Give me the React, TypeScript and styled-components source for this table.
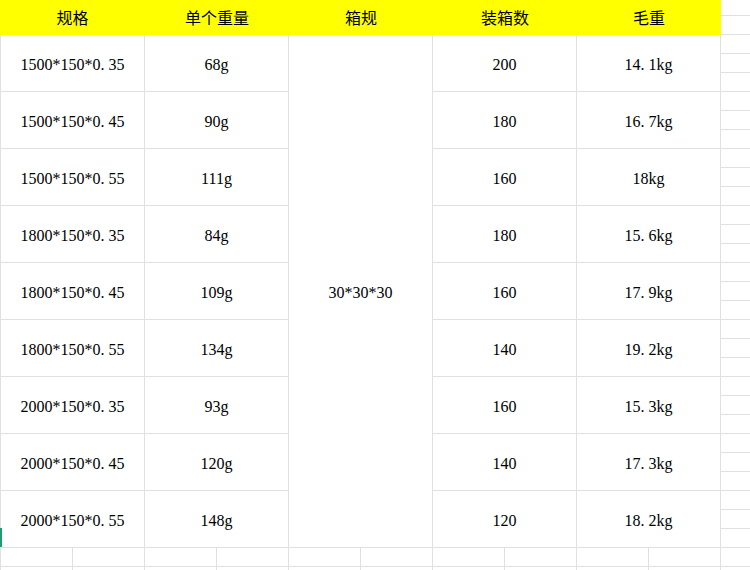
import React from 'react'
import styled, { createGlobalStyle } from 'styled-components'

const LINE = '#e0e0e0'

const GlobalStyle = createGlobalStyle`
    html, body {
        margin: 0;
        padding: 0;
        background: #ffffff;
        overflow: hidden;
    }
`

const Sheet = styled.div`
    width: 750px;
    height: 570px;
    overflow: hidden;
    display: flex;
    flex-direction: column;
    font-family: 'Liberation Serif', 'Noto Sans CJK SC', serif;
    color: #000000;
`

const Top = styled.div`
    display: flex;
    flex-direction: row;
    height: 548px;
`

const Table = styled.div`
    display: grid;
    grid-template-columns: 145px repeat(4, 144px);
    grid-template-rows: 35px repeat(9, 57px);
`

const HeadCell = styled.div`
    background: #ffff00;
    display: flex;
    align-items: center;
    justify-content: center;
    padding-bottom: 1px;
    font-family: 'Noto Sans CJK SC', sans-serif;
    font-size: 16px;
`

const Cell = styled.div<{ $col: number; $rows?: number }>`
    position: relative;
    display: flex;
    align-items: center;
    justify-content: center;
    padding-top: 3px;
    grid-column: ${p => p.$col};
    grid-row: ${p => (p.$rows ? `span ${p.$rows}` : 'auto')};
    border-right: 1px solid ${LINE};
    border-bottom: 1px solid ${LINE};
    border-left: ${p => (p.$col === 1 ? `1px solid ${LINE}` : 'none')};
    font-size: 16px;
    white-space: pre;
`

// SimSun-style full half-width period
const Dot = styled.span`
    display: inline-block;
    width: 0.5em;
`

const Marker = styled.div`
    position: absolute;
    left: -1px;
    bottom: 0;
    width: 2px;
    height: 19px;
    background: #1f9d6f;
`

const Filler = styled.div`
    width: 29px;
    display: flex;
    flex-direction: column;
`

const FillRow = styled.div<{ $h: number }>`
    height: ${p => p.$h}px;
    flex: none;
    box-sizing: border-box;
    border-bottom: 1px solid ${LINE};
`

const BottomRow = styled.div`
    display: grid;
    grid-template-columns: 73px repeat(9, 72px) 29px;
    grid-auto-rows: 19px;
`

const EmptyCell = styled.div<{ $first?: boolean; $last?: boolean }>`
    box-sizing: border-box;
    border-bottom: 1px solid ${LINE};
    border-right: ${p => (p.$last ? 'none' : `1px solid ${LINE}`)};
    border-left: ${p => (p.$first ? `1px solid ${LINE}` : 'none')};
`

const headers = ['规格', '单个重量', '箱规', '装箱数', '毛重']

const rows = [
    ['1500*150*0.35', '68g', '200', '14.1kg'],
    ['1500*150*0.45', '90g', '180', '16.7kg'],
    ['1500*150*0.55', '111g', '160', '18kg'],
    ['1800*150*0.35', '84g', '180', '15.6kg'],
    ['1800*150*0.45', '109g', '160', '17.9kg'],
    ['1800*150*0.55', '134g', '140', '19.2kg'],
    ['2000*150*0.35', '93g', '160', '15.3kg'],
    ['2000*150*0.45', '120g', '140', '17.3kg'],
    ['2000*150*0.55', '148g', '120', '18.2kg'],
]

const Value = ({ text }: { text: string }) => {
    const parts = text.split('.')
    return (
        <span>
            {parts.map((p, i) => (
                <React.Fragment key={i}>
                    {i > 0 && <Dot>.</Dot>}
                    {p}
                </React.Fragment>
            ))}
        </span>
    )
}

const App = () => {
    return (
        <>
            <GlobalStyle />
            <Sheet>
                <Top>
                    <Table>
                        {headers.map(h => (
                            <HeadCell key={h}>{h}</HeadCell>
                        ))}
                        {rows.map((r, i) => (
                            <React.Fragment key={r[0]}>
                                <Cell $col={1}>
                                    <Value text={r[0]} />
                                    {i === rows.length - 1 && <Marker />}
                                </Cell>
                                <Cell $col={2}>{r[1]}</Cell>
                                {i === 0 && (
                                    <Cell $col={3} $rows={9}>30*30*30</Cell>
                                )}
                                <Cell $col={4}>{r[2]}</Cell>
                                <Cell $col={5}>
                                    <Value text={r[3]} />
                                </Cell>
                            </React.Fragment>
                        ))}
                    </Table>
                    <Filler>
                        <FillRow $h={16} />
                        {Array.from({ length: 28 }).map((_, i) => (
                            <FillRow key={i} $h={19} />
                        ))}
                    </Filler>
                </Top>
                <BottomRow>
                    {Array.from({ length: 22 }).map((_, i) => (
                        <EmptyCell key={i} $first={i % 11 === 0} $last={i % 11 === 10} />
                    ))}
                </BottomRow>
            </Sheet>
        </>
    )
}

export default App
